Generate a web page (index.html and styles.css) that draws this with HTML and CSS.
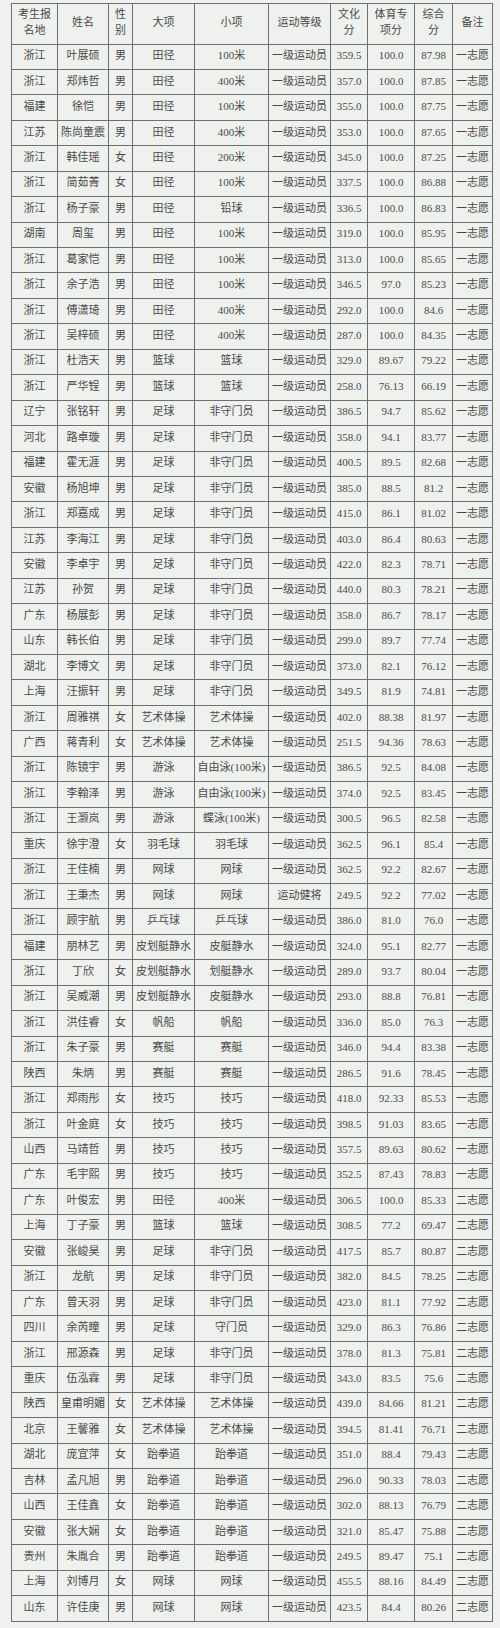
FILE: index.html
```html
<!DOCTYPE html>
<html lang="zh-CN">
<head>
<meta charset="utf-8">
<title>录取名单</title>
<link rel="stylesheet" href="styles.css">
</head>
<body>
<table class="list">
<colgroup>
<col class="c1"><col class="c2"><col class="c3"><col class="c4"><col class="c5"><col class="c6"><col class="c7"><col class="c8"><col class="c9"><col class="c10">
</colgroup>
<thead>
<tr class="head"><th>考生报<br>名地</th><th>姓名</th><th>性<br>别</th><th>大项</th><th>小项</th><th>运动等级</th><th>文化<br>分</th><th>体育专<br>项分</th><th>综合<br>分</th><th>备注</th></tr>
</thead>
<tbody>
<tr><td>浙江</td><td>叶展硕</td><td>男</td><td>田径</td><td>100米</td><td>一级运动员</td><td>359.5</td><td>100.0</td><td>87.98</td><td>一志愿</td></tr>
<tr><td>浙江</td><td>郑炜哲</td><td>男</td><td>田径</td><td>400米</td><td>一级运动员</td><td>357.0</td><td>100.0</td><td>87.85</td><td>一志愿</td></tr>
<tr><td>福建</td><td>徐恺</td><td>男</td><td>田径</td><td>100米</td><td>一级运动员</td><td>355.0</td><td>100.0</td><td>87.75</td><td>一志愿</td></tr>
<tr><td>江苏</td><td>陈尚童震</td><td>男</td><td>田径</td><td>400米</td><td>一级运动员</td><td>353.0</td><td>100.0</td><td>87.65</td><td>一志愿</td></tr>
<tr><td>浙江</td><td>韩佳瑶</td><td>女</td><td>田径</td><td>200米</td><td>一级运动员</td><td>345.0</td><td>100.0</td><td>87.25</td><td>一志愿</td></tr>
<tr><td>浙江</td><td>简茹菁</td><td>女</td><td>田径</td><td>100米</td><td>一级运动员</td><td>337.5</td><td>100.0</td><td>86.88</td><td>一志愿</td></tr>
<tr><td>浙江</td><td>杨子豪</td><td>男</td><td>田径</td><td>铅球</td><td>一级运动员</td><td>336.5</td><td>100.0</td><td>86.83</td><td>一志愿</td></tr>
<tr><td>湖南</td><td>周玺</td><td>男</td><td>田径</td><td>100米</td><td>一级运动员</td><td>319.0</td><td>100.0</td><td>85.95</td><td>一志愿</td></tr>
<tr><td>浙江</td><td>葛家恺</td><td>男</td><td>田径</td><td>100米</td><td>一级运动员</td><td>313.0</td><td>100.0</td><td>85.65</td><td>一志愿</td></tr>
<tr><td>浙江</td><td>余子浩</td><td>男</td><td>田径</td><td>100米</td><td>一级运动员</td><td>346.5</td><td>97.0</td><td>85.23</td><td>一志愿</td></tr>
<tr><td>浙江</td><td>傅潇琦</td><td>男</td><td>田径</td><td>400米</td><td>一级运动员</td><td>292.0</td><td>100.0</td><td>84.6</td><td>一志愿</td></tr>
<tr><td>浙江</td><td>吴梓硕</td><td>男</td><td>田径</td><td>400米</td><td>一级运动员</td><td>287.0</td><td>100.0</td><td>84.35</td><td>一志愿</td></tr>
<tr><td>浙江</td><td>杜浩天</td><td>男</td><td>篮球</td><td>篮球</td><td>一级运动员</td><td>329.0</td><td>89.67</td><td>79.22</td><td>一志愿</td></tr>
<tr><td>浙江</td><td>严华锃</td><td>男</td><td>篮球</td><td>篮球</td><td>一级运动员</td><td>258.0</td><td>76.13</td><td>66.19</td><td>一志愿</td></tr>
<tr><td>辽宁</td><td>张铭轩</td><td>男</td><td>足球</td><td>非守门员</td><td>一级运动员</td><td>386.5</td><td>94.7</td><td>85.62</td><td>一志愿</td></tr>
<tr><td>河北</td><td>路卓璇</td><td>男</td><td>足球</td><td>非守门员</td><td>一级运动员</td><td>358.0</td><td>94.1</td><td>83.77</td><td>一志愿</td></tr>
<tr><td>福建</td><td>霍无涯</td><td>男</td><td>足球</td><td>非守门员</td><td>一级运动员</td><td>400.5</td><td>89.5</td><td>82.68</td><td>一志愿</td></tr>
<tr><td>安徽</td><td>杨旭坤</td><td>男</td><td>足球</td><td>非守门员</td><td>一级运动员</td><td>385.0</td><td>88.5</td><td>81.2</td><td>一志愿</td></tr>
<tr><td>浙江</td><td>郑嘉成</td><td>男</td><td>足球</td><td>非守门员</td><td>一级运动员</td><td>415.0</td><td>86.1</td><td>81.02</td><td>一志愿</td></tr>
<tr><td>江苏</td><td>李海江</td><td>男</td><td>足球</td><td>非守门员</td><td>一级运动员</td><td>403.0</td><td>86.4</td><td>80.63</td><td>一志愿</td></tr>
<tr><td>安徽</td><td>李卓宇</td><td>男</td><td>足球</td><td>非守门员</td><td>一级运动员</td><td>422.0</td><td>82.3</td><td>78.71</td><td>一志愿</td></tr>
<tr><td>江苏</td><td>孙贺</td><td>男</td><td>足球</td><td>非守门员</td><td>一级运动员</td><td>440.0</td><td>80.3</td><td>78.21</td><td>一志愿</td></tr>
<tr><td>广东</td><td>杨展彭</td><td>男</td><td>足球</td><td>非守门员</td><td>一级运动员</td><td>358.0</td><td>86.7</td><td>78.17</td><td>一志愿</td></tr>
<tr><td>山东</td><td>韩长伯</td><td>男</td><td>足球</td><td>非守门员</td><td>一级运动员</td><td>299.0</td><td>89.7</td><td>77.74</td><td>一志愿</td></tr>
<tr><td>湖北</td><td>李博文</td><td>男</td><td>足球</td><td>非守门员</td><td>一级运动员</td><td>373.0</td><td>82.1</td><td>76.12</td><td>一志愿</td></tr>
<tr><td>上海</td><td>汪振轩</td><td>男</td><td>足球</td><td>非守门员</td><td>一级运动员</td><td>349.5</td><td>81.9</td><td>74.81</td><td>一志愿</td></tr>
<tr><td>浙江</td><td>周雅祺</td><td>女</td><td>艺术体操</td><td>艺术体操</td><td>一级运动员</td><td>402.0</td><td>88.38</td><td>81.97</td><td>一志愿</td></tr>
<tr><td>广西</td><td>蒋青利</td><td>女</td><td>艺术体操</td><td>艺术体操</td><td>一级运动员</td><td>251.5</td><td>94.36</td><td>78.63</td><td>一志愿</td></tr>
<tr><td>浙江</td><td>陈镜宇</td><td>男</td><td>游泳</td><td>自由泳(100米)</td><td>一级运动员</td><td>386.5</td><td>92.5</td><td>84.08</td><td>一志愿</td></tr>
<tr><td>浙江</td><td>李翰泽</td><td>男</td><td>游泳</td><td>自由泳(100米)</td><td>一级运动员</td><td>374.0</td><td>92.5</td><td>83.45</td><td>一志愿</td></tr>
<tr><td>浙江</td><td>王灏岚</td><td>男</td><td>游泳</td><td>蝶泳(100米)</td><td>一级运动员</td><td>300.5</td><td>96.5</td><td>82.58</td><td>一志愿</td></tr>
<tr><td>重庆</td><td>徐宇澄</td><td>女</td><td>羽毛球</td><td>羽毛球</td><td>一级运动员</td><td>362.5</td><td>96.1</td><td>85.4</td><td>一志愿</td></tr>
<tr><td>浙江</td><td>王佳楠</td><td>男</td><td>网球</td><td>网球</td><td>一级运动员</td><td>362.5</td><td>92.2</td><td>82.67</td><td>一志愿</td></tr>
<tr><td>浙江</td><td>王秉杰</td><td>男</td><td>网球</td><td>网球</td><td>运动健将</td><td>249.5</td><td>92.2</td><td>77.02</td><td>一志愿</td></tr>
<tr><td>浙江</td><td>顾宇航</td><td>男</td><td>乒乓球</td><td>乒乓球</td><td>一级运动员</td><td>386.0</td><td>81.0</td><td>76.0</td><td>一志愿</td></tr>
<tr><td>福建</td><td>朋林艺</td><td>男</td><td>皮划艇静水</td><td>皮艇静水</td><td>一级运动员</td><td>324.0</td><td>95.1</td><td>82.77</td><td>一志愿</td></tr>
<tr><td>浙江</td><td>丁欣</td><td>女</td><td>皮划艇静水</td><td>划艇静水</td><td>一级运动员</td><td>289.0</td><td>93.7</td><td>80.04</td><td>一志愿</td></tr>
<tr><td>浙江</td><td>吴威潮</td><td>男</td><td>皮划艇静水</td><td>皮艇静水</td><td>一级运动员</td><td>293.0</td><td>88.8</td><td>76.81</td><td>一志愿</td></tr>
<tr><td>浙江</td><td>洪佳睿</td><td>女</td><td>帆船</td><td>帆船</td><td>一级运动员</td><td>336.0</td><td>85.0</td><td>76.3</td><td>一志愿</td></tr>
<tr><td>浙江</td><td>朱子豪</td><td>男</td><td>赛艇</td><td>赛艇</td><td>一级运动员</td><td>346.0</td><td>94.4</td><td>83.38</td><td>一志愿</td></tr>
<tr><td>陕西</td><td>朱炳</td><td>男</td><td>赛艇</td><td>赛艇</td><td>一级运动员</td><td>286.5</td><td>91.6</td><td>78.45</td><td>一志愿</td></tr>
<tr><td>浙江</td><td>郑雨彤</td><td>女</td><td>技巧</td><td>技巧</td><td>一级运动员</td><td>418.0</td><td>92.33</td><td>85.53</td><td>一志愿</td></tr>
<tr><td>浙江</td><td>叶金庭</td><td>女</td><td>技巧</td><td>技巧</td><td>一级运动员</td><td>398.5</td><td>91.03</td><td>83.65</td><td>一志愿</td></tr>
<tr><td>山西</td><td>马靖哲</td><td>男</td><td>技巧</td><td>技巧</td><td>一级运动员</td><td>357.5</td><td>89.63</td><td>80.62</td><td>一志愿</td></tr>
<tr><td>广东</td><td>毛宇熙</td><td>男</td><td>技巧</td><td>技巧</td><td>一级运动员</td><td>352.5</td><td>87.43</td><td>78.83</td><td>一志愿</td></tr>
<tr><td>广东</td><td>叶俊宏</td><td>男</td><td>田径</td><td>400米</td><td>一级运动员</td><td>306.5</td><td>100.0</td><td>85.33</td><td>二志愿</td></tr>
<tr><td>上海</td><td>丁子豪</td><td>男</td><td>篮球</td><td>篮球</td><td>一级运动员</td><td>308.5</td><td>77.2</td><td>69.47</td><td>二志愿</td></tr>
<tr><td>安徽</td><td>张峻昊</td><td>男</td><td>足球</td><td>非守门员</td><td>一级运动员</td><td>417.5</td><td>85.7</td><td>80.87</td><td>二志愿</td></tr>
<tr><td>浙江</td><td>龙航</td><td>男</td><td>足球</td><td>非守门员</td><td>一级运动员</td><td>382.0</td><td>84.5</td><td>78.25</td><td>二志愿</td></tr>
<tr><td>广东</td><td>曾天羽</td><td>男</td><td>足球</td><td>非守门员</td><td>一级运动员</td><td>423.0</td><td>81.1</td><td>77.92</td><td>二志愿</td></tr>
<tr><td>四川</td><td>余芮瞳</td><td>男</td><td>足球</td><td>守门员</td><td>一级运动员</td><td>329.0</td><td>86.3</td><td>76.86</td><td>二志愿</td></tr>
<tr><td>浙江</td><td>邢源森</td><td>男</td><td>足球</td><td>非守门员</td><td>一级运动员</td><td>378.0</td><td>81.3</td><td>75.81</td><td>二志愿</td></tr>
<tr><td>重庆</td><td>伍泓霖</td><td>男</td><td>足球</td><td>非守门员</td><td>一级运动员</td><td>343.0</td><td>83.5</td><td>75.6</td><td>二志愿</td></tr>
<tr><td>陕西</td><td>皇甫明媚</td><td>女</td><td>艺术体操</td><td>艺术体操</td><td>一级运动员</td><td>439.0</td><td>84.66</td><td>81.21</td><td>二志愿</td></tr>
<tr><td>北京</td><td>王馨雅</td><td>女</td><td>艺术体操</td><td>艺术体操</td><td>一级运动员</td><td>394.5</td><td>81.41</td><td>76.71</td><td>二志愿</td></tr>
<tr><td>湖北</td><td>庞宜萍</td><td>女</td><td>跆拳道</td><td>跆拳道</td><td>一级运动员</td><td>351.0</td><td>88.4</td><td>79.43</td><td>二志愿</td></tr>
<tr><td>吉林</td><td>孟凡旭</td><td>男</td><td>跆拳道</td><td>跆拳道</td><td>一级运动员</td><td>296.0</td><td>90.33</td><td>78.03</td><td>二志愿</td></tr>
<tr><td>山西</td><td>王佳鑫</td><td>女</td><td>跆拳道</td><td>跆拳道</td><td>一级运动员</td><td>302.0</td><td>88.13</td><td>76.79</td><td>二志愿</td></tr>
<tr><td>安徽</td><td>张大娴</td><td>女</td><td>跆拳道</td><td>跆拳道</td><td>一级运动员</td><td>321.0</td><td>85.47</td><td>75.88</td><td>二志愿</td></tr>
<tr><td>贵州</td><td>朱胤合</td><td>男</td><td>跆拳道</td><td>跆拳道</td><td>一级运动员</td><td>249.5</td><td>89.47</td><td>75.1</td><td>二志愿</td></tr>
<tr><td>上海</td><td>刘博月</td><td>女</td><td>网球</td><td>网球</td><td>一级运动员</td><td>455.5</td><td>88.16</td><td>84.49</td><td>二志愿</td></tr>
<tr><td>山东</td><td>许佳庚</td><td>男</td><td>网球</td><td>网球</td><td>一级运动员</td><td>423.5</td><td>84.4</td><td>80.26</td><td>二志愿</td></tr>
</tbody>
</table>
</body>
</html>
```

FILE: styles.css
```css
html, body {
  margin: 0;
  padding: 0;
  background: #eff1ef;
}

body {
  padding: 3px 0 0 11px;
  font-family: "Liberation Serif", "Noto Sans CJK SC", serif;
  color: #4a4a4a;
}

.list {
  border-collapse: collapse;
  table-layout: fixed;
  width: 481px;
  font-size: 11px;
}

.c1 { width: 46px; }
.c2 { width: 51px; }
.c3 { width: 24px; }
.c4 { width: 62px; }
.c5 { width: 74px; }
.c6 { width: 62px; }
.c7 { width: 37px; }
.c8 { width: 47px; }
.c9 { width: 38px; }
.c10 { width: 40px; }

.list th,
.list td {
  border: 1px solid #6f6f6f;
  padding: 0 0 3px;
  text-align: center;
  vertical-align: middle;
  white-space: nowrap;
  font-weight: normal;
}

.list th {
  line-height: 16.5px;
}

.head {
  height: 40.5px;
}

.list tbody tr {
  height: 25.44px;
}

.list td {
  line-height: 14px;
}
```
